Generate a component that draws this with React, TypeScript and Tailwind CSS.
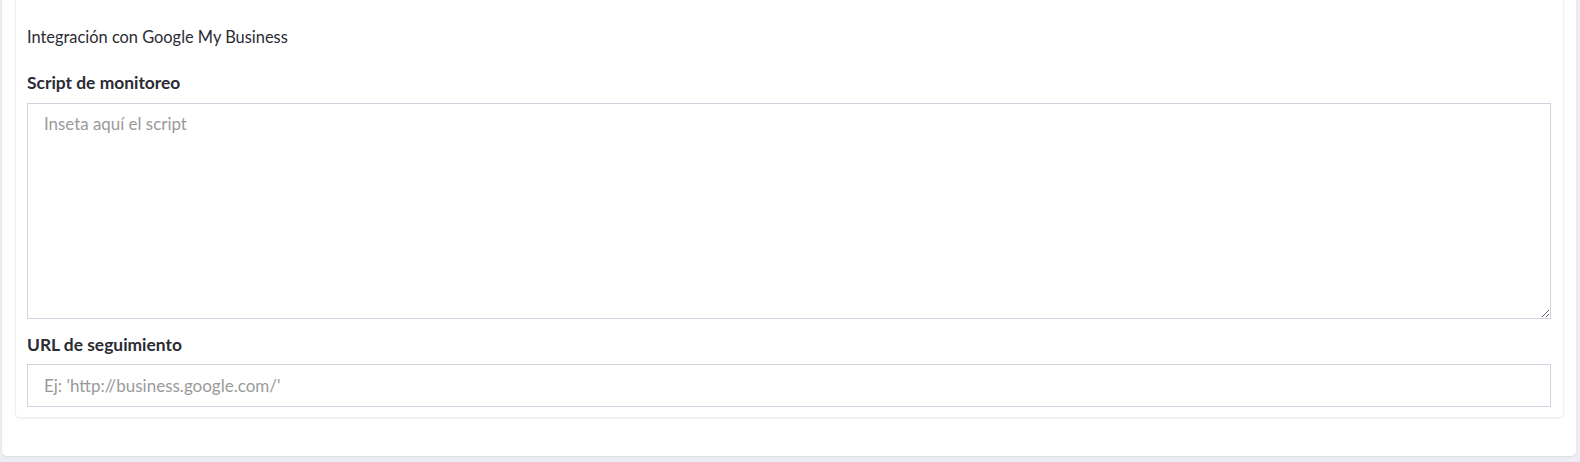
export default function App() {
  return (
    <div className="min-h-[462px] bg-[#eceef4] pl-[2px] pr-[4px] pb-[5px]" style={{ fontFamily: '"Source Sans Pro", Lato, "Open Sans", sans-serif' }}>
      <div className="bg-white rounded-b-[5px] shadow-[0_1px_2px_rgba(0,0,0,0.08)] pl-[13px] pr-[12px] pb-[38px]">
        <div className="bg-white border border-[#f0f0f3] border-t-0 rounded-b-[5px] shadow-[0_1px_2px_rgba(0,0,0,0.06)] pl-[11px] pr-[12px] pt-[25px] pb-[10px]">
          <div className="text-[16.4px] leading-[24px] text-[#2b2b33]">Integración con Google My Business</div>
          <label className="block mt-[22px] text-[17.4px] leading-[24px] font-bold text-[#2b2b33]">Script de monitoreo</label>
          <textarea
            className="block mt-[8px] w-full h-[216px] border border-[#d4d2df] bg-white px-[16px] py-[8px] text-[16.9px] leading-[24px] text-[#333] placeholder:text-[#9a9a9a] outline-none"
            placeholder="Inseta aquí el script"
          />
          <label className="block mt-[14px] text-[17.4px] leading-[24px] font-bold text-[#2b2b33]">URL de seguimiento</label>
          <input
            className="block mt-[7px] w-full h-[43px] border border-[#d4d2df] bg-white px-[16px] text-[17px] text-[#333] placeholder:text-[#9a9a9a] outline-none"
            placeholder="Ej: 'http://business.google.com/'"
          />
        </div>
      </div>
    </div>
  );
}
